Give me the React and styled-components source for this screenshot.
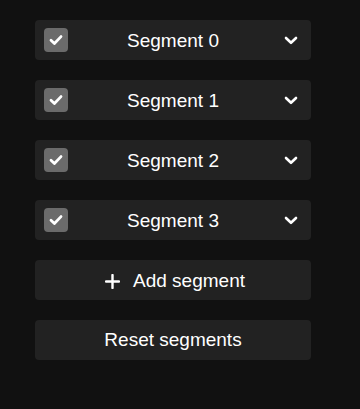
import React from "react";
import styled, { createGlobalStyle } from "styled-components";

const Global = createGlobalStyle`
  html, body { margin: 0; padding: 0; background: #111111; }
  body { font-family: "Liberation Sans", Arial, sans-serif; }
`;

const Page = styled.div`
  width: 360px;
  height: 409px;
  background: #111111;
  box-sizing: border-box;
  padding: 20px 49px 0 35px;
`;

const List = styled.div`
  display: flex;
  flex-direction: column;
  gap: 20px;
`;

const Row = styled.div`
  height: 40px;
  box-sizing: border-box;
  background: #222222;
  border-radius: 4px;
  display: flex;
  align-items: center;
  padding: 0 12px 0 9px;
  color: #ffffff;
`;

const Check = styled.span`
  width: 24px;
  height: 24px;
  border-radius: 4px;
  background: #6b6b6b;
  display: flex;
  align-items: center;
  justify-content: center;
  flex: none;
`;

const Label = styled.span`
  flex: 1;
  text-align: center;
  font-size: 19px;
  padding: 2px 5px 0 0;
`;

const Chevron = styled.span`
  width: 16px;
  height: 16px;
  display: flex;
  align-items: center;
  justify-content: center;
  flex: none;
`;

const Button = styled.button`
  height: 40px;
  border: none;
  background: #222222;
  border-radius: 4px;
  color: #ffffff;
  font-family: "Liberation Sans", Arial, sans-serif;
  font-size: 19px;
  display: flex;
  align-items: center;
  justify-content: center;
  gap: 13px;
  padding: ${(p) => (p.$icon ? "2px 0 0 4px" : "0")};
`;

const CheckIcon = () => (
  <svg width="16" height="16" viewBox="0 0 16 16">
    <path d="M3 8.3 L6.4 11.5 L13 4.6" fill="none" stroke="#fff" strokeWidth="2.8" strokeLinecap="round" strokeLinejoin="round" />
  </svg>
);

const ChevronIcon = () => (
  <svg width="14" height="9" viewBox="0 0 14 9">
    <path d="M2 2 L7 6.8 L12 2" fill="none" stroke="#fff" strokeWidth="2.6" strokeLinecap="round" strokeLinejoin="round" />
  </svg>
);

const PlusIcon = () => (
  <svg width="15" height="15" viewBox="0 0 15 15">
    <path d="M7.5 1 V14 M1 7.5 H14" stroke="#fff" strokeWidth="2.4" strokeLinecap="round" />
  </svg>
);

export default function App() {
  const segments = [0, 1, 2, 3];
  return (
    <>
      <Global />
      <Page>
        <List>
          {segments.map((i) => (
            <Row key={i}>
              <Check><CheckIcon /></Check>
              <Label>Segment {i}</Label>
              <Chevron><ChevronIcon /></Chevron>
            </Row>
          ))}
          <Button $icon><PlusIcon />Add segment</Button>
          <Button>Reset segments</Button>
        </List>
      </Page>
    </>
  );
}
